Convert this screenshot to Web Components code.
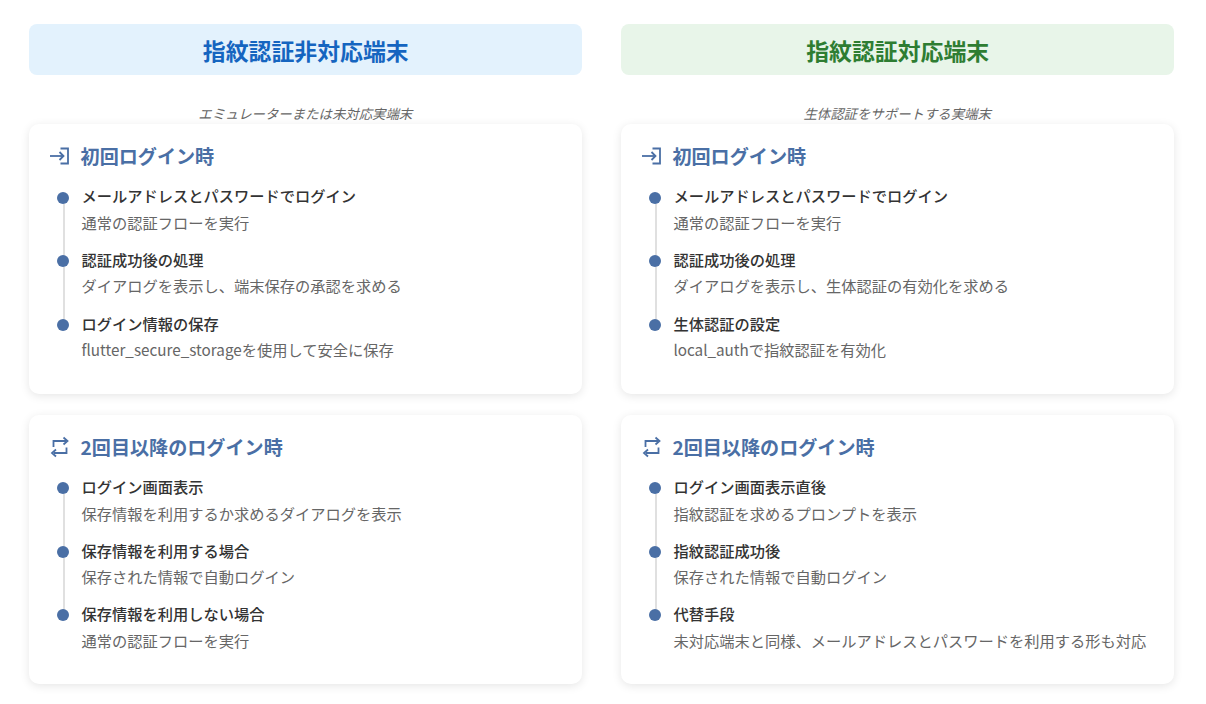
<!DOCTYPE html>
<html lang="ja">
<head>
<meta charset="utf-8">
<title>指紋認証</title>
<style>
  html, body { margin: 0; background: #fff; }
  body { font-family: "Noto Sans CJK JP", "Noto Sans", sans-serif; }
</style>
</head>
<body>
<auth-compare>
  <auth-column tone="blue" heading="指紋認証非対応端末" note="エミュレーターまたは未対応実端末">
    <flow-card icon="login" heading="初回ログイン時">
      <flow-step heading="メールアドレスとパスワードでログイン">通常の認証フローを実行</flow-step>
      <flow-step heading="認証成功後の処理">ダイアログを表示し、端末保存の承認を求める</flow-step>
      <flow-step heading="ログイン情報の保存">flutter_secure_storageを使用して安全に保存</flow-step>
    </flow-card>
    <flow-card icon="repeat" heading="2回目以降のログイン時">
      <flow-step heading="ログイン画面表示">保存情報を利用するか求めるダイアログを表示</flow-step>
      <flow-step heading="保存情報を利用する場合">保存された情報で自動ログイン</flow-step>
      <flow-step heading="保存情報を利用しない場合">通常の認証フローを実行</flow-step>
    </flow-card>
  </auth-column>
  <auth-column tone="green" heading="指紋認証対応端末" note="生体認証をサポートする実端末">
    <flow-card icon="login" heading="初回ログイン時">
      <flow-step heading="メールアドレスとパスワードでログイン">通常の認証フローを実行</flow-step>
      <flow-step heading="認証成功後の処理">ダイアログを表示し、生体認証の有効化を求める</flow-step>
      <flow-step heading="生体認証の設定">local_authで指紋認証を有効化</flow-step>
    </flow-card>
    <flow-card icon="repeat" heading="2回目以降のログイン時">
      <flow-step heading="ログイン画面表示直後">指紋認証を求めるプロンプトを表示</flow-step>
      <flow-step heading="指紋認証成功後">保存された情報で自動ログイン</flow-step>
      <flow-step heading="代替手段">未対応端末と同様、メールアドレスとパスワードを利用する形も対応</flow-step>
    </flow-card>
  </auth-column>
</auth-compare>
<script>
const ICONS = {
  login: '<path d="M11.5 3.5H19V18.5H11.5"/><path d="M1 11H14"/><path d="M10.5 7L14.5 11L10.5 15"/>',
  repeat: '<path d="M4.5 11V5H17"/><path d="M14.5 1.5L18.5 5L14.5 8.5"/><path d="M17.5 11.5V17H5"/><path d="M7 13.5L3 17L7 20.5"/>'
}

class AuthCompare extends HTMLElement {
  constructor() {
    super()
    this.attachShadow({ mode: 'open' })
    this.shadowRoot.innerHTML = `
      <style>
        :host { display: grid; grid-template-columns: 553.2px 553.2px; column-gap: 38.7px; padding: 24px 0 20px 28.7px; }
      </style>
      <slot></slot>
    `
  }
}

class AuthColumn extends HTMLElement {
  constructor() {
    super()
    this.attachShadow({ mode: 'open' })
    const green = this.getAttribute('tone') === 'green'
    this.shadowRoot.innerHTML = `
      <style>
        :host { display: flex; flex-direction: column; min-width: 0; }
        .head {
          height: 51px; display: flex; align-items: center; justify-content: center; padding-left: 1px;
          border-radius: 8px; background: ${green ? '#e8f5e9' : '#e3f2fd'};
          color: ${green ? '#2e7d32' : '#1565c0'};
          font-size: 22.88px; font-weight: 700; margin: 0;
        }
        .note {
          margin: 28px 0 0; height: 21px; line-height: 21px; text-align: center;
          font-size: 13.4px; font-style: italic; color: #666;
        }
        .cards { display: flex; flex-direction: column; gap: 20.8px; }
      </style>
      <h2 class="head">${this.getAttribute('heading')}</h2>
      <p class="note">${this.getAttribute('note')}</p>
      <div class="cards"><slot></slot></div>
    `
  }
}

class FlowCard extends HTMLElement {
  constructor() {
    super()
    this.attachShadow({ mode: 'open' })
    this.shadowRoot.innerHTML = `
      <style>
        :host {
          display: block; height: 269.8px; box-sizing: border-box; padding: 18.2px 20px 20px;
          background: #fff; border-radius: 10px; box-shadow: 0 2px 10px rgba(0,0,0,.1);
        }
        .title {
          display: flex; align-items: center; gap: 9.85px; margin: 0 0 13.3px;
          font-size: 19.1px; font-weight: 700; color: #4a6fa5; height: 28px;
        }
        svg { width: 22px; height: 22px; flex: none; fill: none; stroke: currentColor; stroke-width: 1.8; }
        .steps { display: flex; flex-direction: column; }
      </style>
      <h3 class="title">
        <svg viewBox="0 0 22 22">${ICONS[this.getAttribute('icon')]}</svg>
        ${this.getAttribute('heading')}
      </h3>
      <div class="steps"><slot></slot></div>
    `
  }
}

class FlowStep extends HTMLElement {
  constructor() {
    super()
    this.attachShadow({ mode: 'open' })
    this.shadowRoot.innerHTML = `
      <style>
        :host { display: flex; gap: 12.15px; padding-left: 8.7px; }
        .rail { width: 12px; display: flex; flex-direction: column; align-items: center; padding-top: 8.2px; }
        .dot { width: 12px; height: 12px; border-radius: 50%; background: #4a6fa5; flex: none; }
        .line { flex: 1; width: 2px; margin: 0 0 -9px 1px; background: #e0e0e0; }
        :host(:last-child) .line { display: none; }
        .body { padding-bottom: 11.9px; font-size: 15.26px; line-height: 25.84px; }
        .name { font-weight: 500; color: #333; margin-bottom: .6px; }
        .desc { color: #666; line-height: 25.24px; }
      </style>
      <div class="rail"><span class="dot"></span><span class="line"></span></div>
      <div class="body">
        <div class="name">${this.getAttribute('heading')}</div>
        <div class="desc"><slot></slot></div>
      </div>
    `
  }
}

customElements.define('auth-compare', AuthCompare)
customElements.define('auth-column', AuthColumn)
customElements.define('flow-card', FlowCard)
customElements.define('flow-step', FlowStep)
</script>
</body>
</html>
